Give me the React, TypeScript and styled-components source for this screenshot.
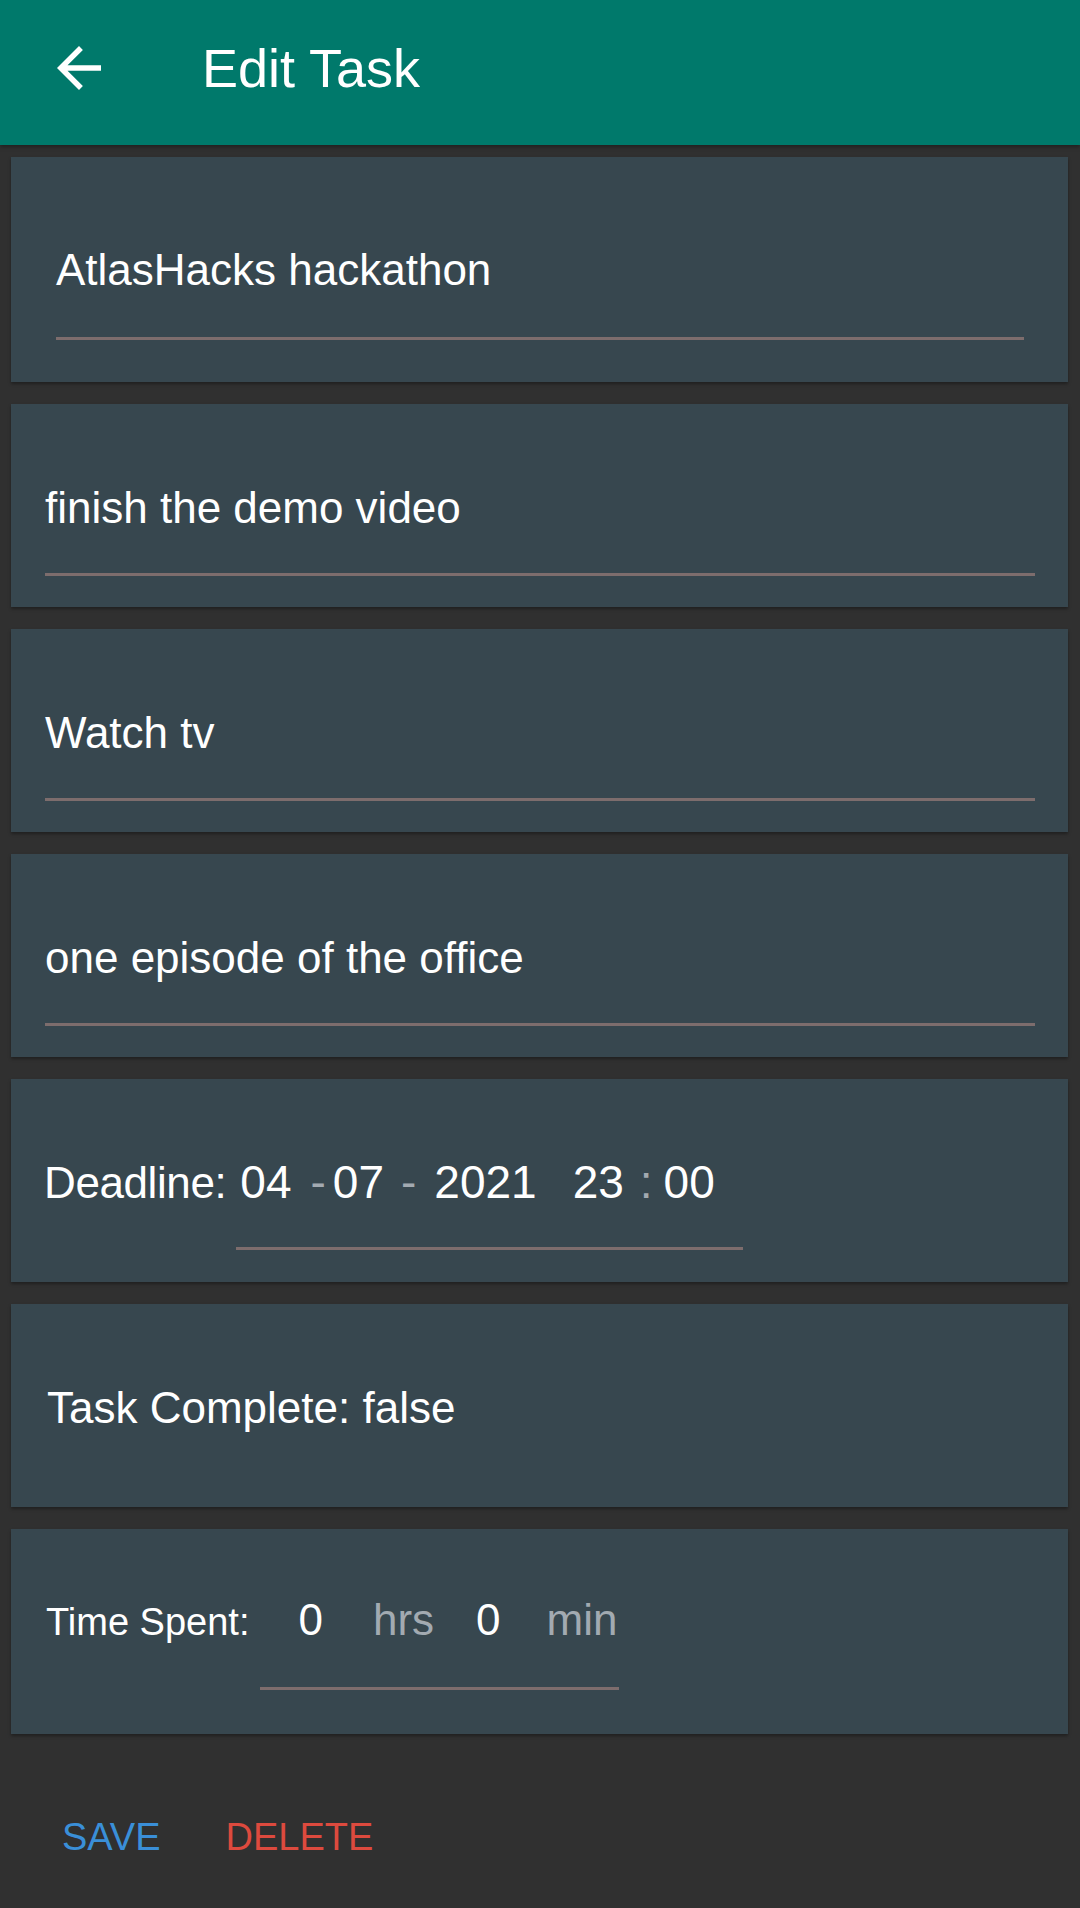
import React from 'react';
import styled, { createGlobalStyle } from 'styled-components';

const GlobalStyle = createGlobalStyle`
  html, body {
    margin: 0;
    padding: 0;
    background-color: #303030;
  }
  body {
    font-family: "Liberation Sans", Arial, sans-serif;
    color: #ffffff;
  }
  * {
    box-sizing: border-box;
  }
`;

const Screen = styled.div`
  width: 1080px;
  min-height: 1908px;
  background-color: #303030;
`;

const AppBar = styled.header`
  height: 145px;
  padding: 0 0 10px 46px;
  display: flex;
  align-items: center;
  background-color: #00796b;
  box-shadow: 0 2px 4px rgba(0, 0, 0, 0.35);
`;

const BackButton = styled.button`
  width: 66px;
  height: 66px;
  padding: 0;
  border: none;
  background: none;
  display: flex;
  color: #ffffff;
`;

const Title = styled.h1`
  margin: 0 0 0 90px;
  font-size: 54px;
  line-height: 64px;
  font-weight: 400;
  color: #ffffff;
`;

const CardList = styled.main`
  display: flex;
  flex-direction: column;
  gap: 22px;
  padding: 12px 12px 0 11px;
`;

const Card = styled.section<{ $pad: string }>`
  background-color: #37474f;
  padding: ${(p) => p.$pad};
  box-shadow: 0 2px 3px rgba(0, 0, 0, 0.35);
`;

const Field = styled.div<{ $bottom: number }>`
  font-size: 44px;
  line-height: 52px;
  color: #ffffff;
  white-space: nowrap;
  padding-bottom: ${(p) => p.$bottom}px;
  border-bottom: 3px solid #7d6d6d;
`;

const Row = styled.div`
  display: flex;
  align-items: baseline;
`;

const Label = styled.span<{ $size: number; $spacing?: number }>`
  font-size: ${(p) => p.$size}px;
  letter-spacing: ${(p) => p.$spacing ?? 0}px;
  line-height: 52px;
  color: #ffffff;
  white-space: nowrap;
`;

const InlineField = styled.div<{
  $left: number;
  $pl: number;
  $pr: number;
  $bottom: number;
  $size: number;
}>`
  display: flex;
  align-items: baseline;
  margin-left: ${(p) => p.$left}px;
  padding: 0 ${(p) => p.$pr}px ${(p) => p.$bottom}px ${(p) => p.$pl}px;
  border-bottom: 3px solid #7d6d6d;
  font-size: ${(p) => p.$size}px;
  line-height: 52px;
`;

const Segment = styled.span<{ $gap?: number; $muted?: boolean }>`
  margin-left: ${(p) => p.$gap ?? 0}px;
  color: ${(p) => (p.$muted ? '#a2aab1' : '#ffffff')};
`;

const StatusText = styled.div`
  font-size: 44px;
  line-height: 52px;
  padding-left: 1px;
  color: #ffffff;
`;

const ButtonBar = styled.footer`
  display: flex;
  gap: 65px;
  margin-top: 81px;
  padding-left: 62px;
`;

const TextButton = styled.button<{ $color: string }>`
  padding: 0;
  border: none;
  background: none;
  font-family: "Liberation Sans", Arial, sans-serif;
  font-size: 38px;
  line-height: 45px;
  text-transform: uppercase;
  color: ${(p) => p.$color};
`;

const BackArrow = () => (
  <svg width="66" height="66" viewBox="0 0 24 24" fill="currentColor">
    <path d="M20 11H7.83l5.59-5.59L12 4l-8 8 8 8 1.41-1.41L7.83 13H20v-2z" />
  </svg>
);

const EditTaskPage: React.FC = () => {
  return (
    <Screen>
      <GlobalStyle />
      <AppBar>
        <BackButton aria-label="Back">
          <BackArrow />
        </BackButton>
        <Title>Edit Task</Title>
      </AppBar>

      <CardList>
        <Card $pad="87px 44px 42px 45px">
          <Field $bottom={41}>AtlasHacks hackathon</Field>
        </Card>

        <Card $pad="78px 33px 31px 34px">
          <Field $bottom={39}>finish the demo video</Field>
        </Card>

        <Card $pad="78px 33px 31px 34px">
          <Field $bottom={39}>Watch tv</Field>
        </Card>

        <Card $pad="78px 33px 31px 34px">
          <Field $bottom={39}>one episode of the office</Field>
        </Card>

        <Card $pad="77px 33px 32px 33px">
          <Row>
            <Label $size={44} $spacing={-0.4}>Deadline:</Label>
            <InlineField $left={10} $pl={4} $pr={28} $bottom={39} $size={46}>
              <Segment>04</Segment>
              <Segment $gap={19} $muted>-</Segment>
              <Segment $gap={7}>07</Segment>
              <Segment $gap={17} $muted>-</Segment>
              <Segment $gap={18}>2021</Segment>
              <Segment $gap={36}>23</Segment>
              <Segment $gap={16} $muted>:</Segment>
              <Segment $gap={11}>00</Segment>
            </InlineField>
          </Row>
        </Card>

        <Card $pad="78px 33px 73px 35px">
          <StatusText>Task Complete: false</StatusText>
        </Card>

        <Card $pad="65px 33px 44px 35px">
          <Row>
            <Label $size={38}>Time Spent:</Label>
            <InlineField $left={11} $pl={38} $pr={2} $bottom={41} $size={44}>
              <Segment>0</Segment>
              <Segment $gap={50} $muted>hrs</Segment>
              <Segment $gap={42}>0</Segment>
              <Segment $gap={46} $muted>min</Segment>
            </InlineField>
          </Row>
        </Card>
      </CardList>

      <ButtonBar>
        <TextButton $color="#3a8fd8">Save</TextButton>
        <TextButton $color="#dd4a3e">Delete</TextButton>
      </ButtonBar>
    </Screen>
  );
};

export default EditTaskPage;
